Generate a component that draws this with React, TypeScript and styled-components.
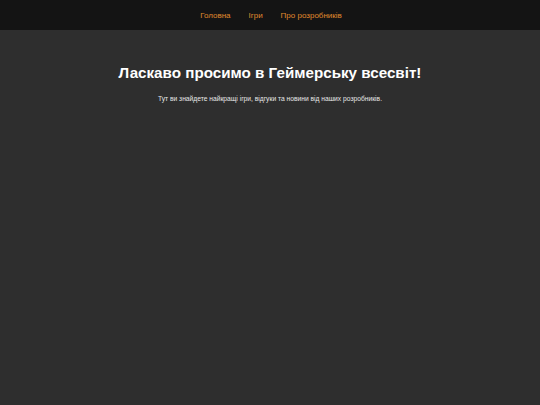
import React from "react";
import styled, { createGlobalStyle } from "styled-components";

const Global = createGlobalStyle`
  html, body { margin: 0; padding: 0; height: 100%; }
  body { background: #2e2e2e; font-family: "Liberation Sans", Arial, sans-serif; color: #fff; }
  #root { min-height: 100%; }
`;

const Header = styled.header`
  background: #141414;
  height: 30px;
  display: flex;
  align-items: center;
  justify-content: center;
`;

const Nav = styled.nav`
  display: flex;
  gap: 18px;
  padding-left: 2px;
`;

const NavLink = styled.a`
  color: #e08a2e;
  font-size: 8px;
  text-decoration: none;
`;

const Main = styled.main`
  display: flex;
  flex-direction: column;
  align-items: center;
  padding-top: 34px;
`;

const Title = styled.h1`
  margin: 0;
  font-size: 15.2px;
  font-weight: bold;
  color: #fff;
`;

const Lead = styled.p`
  margin: 14px 0 0;
  font-size: 6.7px;
  color: #e8e8e8;
`;

export default function App() {
  return (
    <>
      <Global />
      <Header>
        <Nav>
          <NavLink href="#">Головна</NavLink>
          <NavLink href="#">Ігри</NavLink>
          <NavLink href="#">Про розробників</NavLink>
        </Nav>
      </Header>
      <Main>
        <Title>Ласкаво просимо в Геймерську всесвіт!</Title>
        <Lead>Тут ви знайдете найкращі ігри, відгуки та новини від наших розробників.</Lead>
      </Main>
    </>
  );
}
